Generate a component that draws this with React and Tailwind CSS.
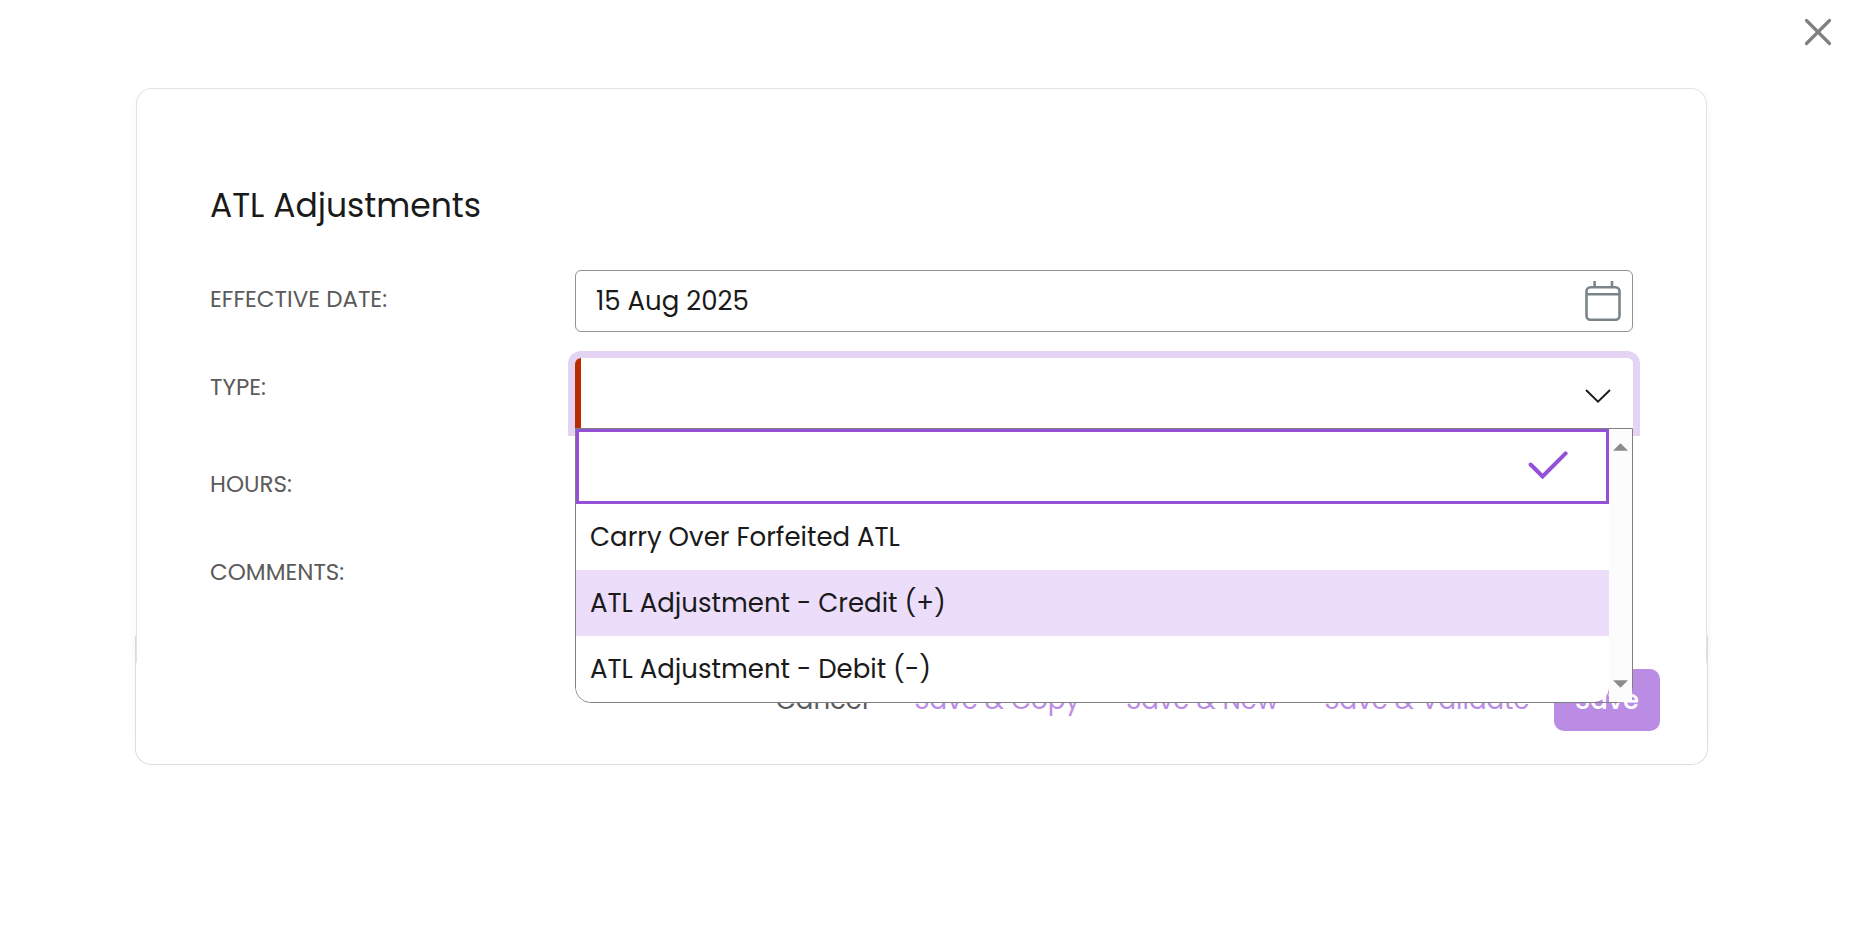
import React, { useState } from "react";

const OPTIONS = [
  "",
  "Carry Over Forfeited ATL",
  "ATL Adjustment - Credit (+)",
  "ATL Adjustment - Debit (-)",
];

function CloseIcon() {
  return (
    <svg width="28" height="28" viewBox="0 0 28 28" fill="none" stroke="#808080" strokeWidth="3.2" strokeLinecap="round" aria-hidden="true">
      <path d="M2.5 2.5 25.5 25.5M25.5 2.5 2.5 25.5" />
    </svg>
  );
}

function CalendarIcon() {
  return (
    <svg width="36" height="40" viewBox="0 0 36 40" fill="none" stroke="#7b8489" strokeWidth="2.6" aria-hidden="true">
      <rect x="1.5" y="6.2" width="33" height="32.6" rx="4" />
      <path d="M1.5 13.2H34.5M9.6 0V6M27 0V6" />
    </svg>
  );
}

function ChevronIcon() {
  return (
    <svg width="26" height="14" viewBox="0 0 26 14" fill="none" stroke="#1a1a1a" strokeWidth="1.9" aria-hidden="true">
      <path d="M1 1 13 12.6 25 1" />
    </svg>
  );
}

function CheckIcon() {
  return (
    <svg width="40" height="28" viewBox="0 0 40 28" fill="none" stroke="#9450d6" strokeWidth="4" strokeLinecap="round" aria-hidden="true">
      <path d="M2.6 13.5 14.6 25.5 37.6 2.4" />
    </svg>
  );
}

function Arrow({ d }) {
  return (
    <svg width="15" height="8" viewBox="0 0 16 8" fill="#8b8b8b" aria-hidden="true">
      <path d={d} />
    </svg>
  );
}

function Row({ id, label, children }) {
  return (
    <div className="grid grid-cols-[365px_minmax(0,1fr)] items-start">
      <label htmlFor={id} className="pt-3 text-[23px] leading-[34px] text-[#5b5b5b]">
        {label}
      </label>
      {children}
    </div>
  );
}

function TypeList({ id, selected, onSelect }) {
  return (
    <div className="absolute inset-x-0 top-full z-10 -mt-px flex rounded-b-[16px] border border-[#808080]">
      <ul id={id} role="listbox" aria-label="Type" className="flex-1 overflow-hidden rounded-b-[15px] bg-white">
        {OPTIONS.map((option) =>
          option === selected ? (
            <li
              key={option}
              role="option"
              aria-selected="true"
              className="flex h-[75px] items-center justify-end border-3 border-[#9450d6] pr-[38px] pb-1"
            >
              {option && <span className="flex-1 pl-3 text-[26px]">{option}</span>}
              <CheckIcon />
            </li>
          ) : (
            <li
              key={option}
              role="option"
              aria-selected="false"
              onClick={() => onSelect(option)}
              className={
                "h-[66px] pl-[14px] text-[26px] leading-[66px] text-[#1a1a1a] " +
                (option.includes("Credit") ? "bg-[#ecddfa]" : "hover:bg-[#ecddfa]")
              }
            >
              {option}
            </li>
          )
        )}
      </ul>
      <div className="flex w-[23px] flex-col items-center justify-between bg-[#fcfcfc] py-[14px]">
        <Arrow d="M8 0 16 8H0Z" />
        <Arrow d="M8 8 16 0H0Z" />
      </div>
    </div>
  );
}

const FIELD = "w-full rounded-[6px] border border-[#8f9496] bg-white text-[26px] text-[#1a1a1a] outline-none";
const LINK = "h-[62px] px-[22px]";

export default function App() {
  const [date, setDate] = useState("15 Aug 2025");
  const [type, setType] = useState("");

  return (
    <main className="relative min-h-screen bg-white pt-[88px] pr-[146px] pl-[135px] font-['Poppins',sans-serif]">
      <button type="button" aria-label="Close" className="absolute top-[18px] right-[22px]">
        <CloseIcon />
      </button>

      <form onSubmit={(e) => e.preventDefault()}>
        <section className="relative z-10 mx-px rounded-t-[16px] border border-b-0 border-[#e2e2e2] bg-white px-[73px] pt-[92px] pb-[58px] shadow-[-7px_0_10px_-7px_rgba(0,0,0,0.04),7px_0_10px_-7px_rgba(0,0,0,0.04)]">
          <h1 className="mb-10 text-[33px] leading-[49px] text-[#1a1a1a]">ATL Adjustments</h1>

          <div className="flex flex-col gap-[26px]">
            <Row id="date" label="EFFECTIVE DATE:">
              <div className="relative">
                <input
                  id="date"
                  value={date}
                  onChange={(e) => setDate(e.target.value)}
                  className={FIELD + " h-[62px] pr-[60px] pl-5"}
                />
                <button type="button" aria-label="Choose date" className="absolute top-[11px] right-[12px]">
                  <CalendarIcon />
                </button>
              </div>
            </Row>

            <Row id="type" label="TYPE:">
              <div className="relative h-[71px] rounded-t-[6px] ring-7 ring-[#e4d3f3]">
                <select
                  id="type"
                  value={type}
                  onChange={(e) => setType(e.target.value)}
                  className="h-full w-full appearance-none rounded-t-[6px] border-l-6 border-[#b92c00] bg-white pl-3 text-[26px] text-[#1a1a1a] outline-none"
                >
                  {OPTIONS.map((option) => (
                    <option key={option} value={option}>
                      {option}
                    </option>
                  ))}
                </select>
                <span className="pointer-events-none absolute inset-y-0 right-[22px] flex items-center pt-1">
                  <ChevronIcon />
                </span>
                <TypeList id="type-list" selected={type} onSelect={setType} />
              </div>
            </Row>

            <Row id="hours" label="HOURS:">
              <input id="hours" className={FIELD + " h-[62px] px-5"} />
            </Row>

            <Row id="comments" label="COMMENTS:">
              <textarea id="comments" className={FIELD + " block h-[62px] resize-none px-5"} />
            </Row>
          </div>
        </section>

        <footer className="-mt-[27px] flex justify-end gap-[2px] rounded-b-[16px] border border-t-0 border-[#dedede] bg-white py-[33px] pr-[47px] text-[26px] text-[#bb8ce4] shadow-[-7px_-10px_10px_-7px_rgba(0,0,0,0.03),7px_-10px_10px_-7px_rgba(0,0,0,0.03)]">
          <button type="button" className={LINK + " text-[#5b5b5b]"}>
            Cancel
          </button>
          <button type="button" className={LINK}>
            Save &amp; Copy
          </button>
          <button type="button" className={LINK}>
            Save &amp; New
          </button>
          <button type="button" className={LINK}>
            Save &amp; Validate
          </button>
          <button type="submit" className="h-[62px] rounded-[10px] bg-[#bb8ce4] px-[21px] font-medium text-white">
            Save
          </button>
        </footer>
      </form>
    </main>
  );
}
